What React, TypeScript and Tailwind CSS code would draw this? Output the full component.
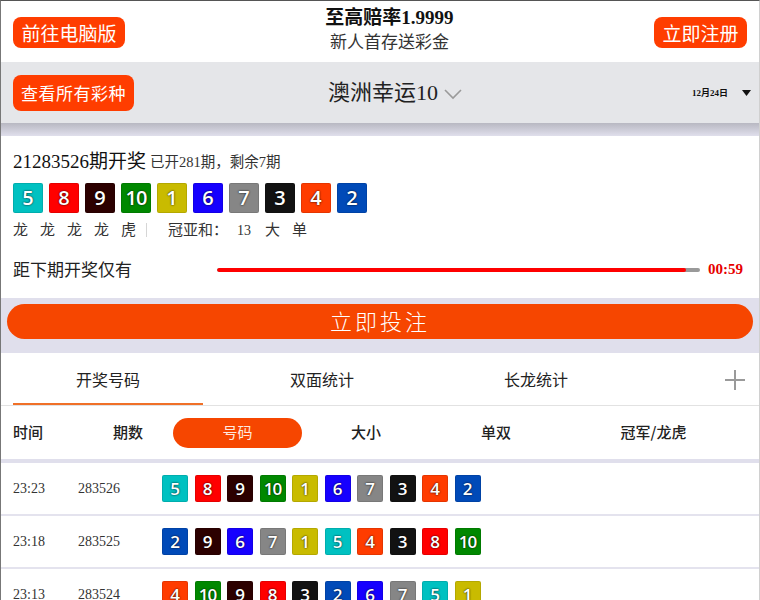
import React from 'react'

const SERIF = "font-['Liberation_Serif','Noto_Sans_CJK_SC',serif]"
const SANS = "font-['Noto_Sans_CJK_SC','Noto_Sans',sans-serif]"

const ballColors: Record<number, string> = {
  1: 'bg-[#c9bb00]',
  2: 'bg-[#004ab8]',
  3: 'bg-[#121212]',
  4: 'bg-[#ff3c00]',
  5: 'bg-[#00c1c1]',
  6: 'bg-[#1600ff]',
  7: 'bg-[#868686]',
  8: 'bg-[#ff0000]',
  9: 'bg-[#2c0000]',
  10: 'bg-[#008800]',
}

const history = [
  { time: '23:23', issue: '283526', nums: [5, 8, 9, 10, 1, 6, 7, 3, 4, 2] },
  { time: '23:18', issue: '283525', nums: [2, 9, 6, 7, 1, 5, 4, 3, 8, 10] },
  { time: '23:13', issue: '283524', nums: [4, 10, 9, 8, 3, 2, 6, 7, 5, 1] },
]

function Ball({ n, big }: { n: number; big?: boolean }) {
  return (
    <div
      className={`${ballColors[n]} ${big ? 'w-[30px] h-[30px] text-[20px]' : 'w-[26px] h-[27px] text-[17px]'} flex items-center justify-center rounded-[2px] border border-black/10 text-white font-semibold font-['Open_Sans','Noto_Sans',sans-serif] [text-shadow:0_0_2px_#000] ${n === 10 ? 'tracking-[-1px]' : ''}`}
    >
      {n}
    </div>
  )
}

export default function App() {
  return (
    <div className="w-[760px] h-[600px] overflow-hidden bg-[#e0dfec] border-t border-l border-r border-t-[#555] border-l-[#777] border-r-[#d0d0d0] flex flex-col">
      {/* top header */}
      <div className="h-[61px] bg-white flex items-center pl-[12px] pr-[12px] shrink-0">
        <button className={`${SANS} h-[31px] w-[112px] rounded-[8px] bg-[#ff3d00] text-white text-[19px] leading-none mt-[1px]`}>前往电脑版</button>
        <div className="flex-1 flex flex-col items-center">
          <div className={`${SERIF} text-[19px] font-bold text-[#111] leading-[22px] mt-[-2px]`}>至高赔率1.9999</div>
          <div className={`${SERIF} text-[17px] text-[#333] leading-[22px] mt-[3px]`}>新人首存送彩金</div>
        </div>
        <button className={`${SANS} h-[31px] w-[93px] rounded-[8px] bg-[#ff3d00] text-white text-[19px] leading-none mt-[1px]`}>立即注册</button>
      </div>

      {/* lottery bar */}
      <div className="h-[61px] bg-[#e5e6e9] flex items-center pl-[12px] shrink-0">
        <button className={`${SANS} h-[36px] w-[121px] rounded-[8px] bg-[#ff3d00] text-white text-[17px] leading-none tracking-[0.5px]`}>查看所有彩种</button>
        <div className="flex-1 flex items-center justify-center">
          <span className={`${SERIF} text-[22px] text-[#222] leading-none`}>澳洲幸运10</span>
          <svg width="20" height="12" viewBox="0 0 20 12" className="ml-[5px] mt-[2px]">
            <path d="M2 2 L10 10 L18 2" fill="none" stroke="#9a9a9a" strokeWidth="1.6" />
          </svg>
        </div>
        <div className="w-[102px] flex items-center justify-end pr-[8px] pt-[2px]">
          <span className={`${SERIF} text-[9px] font-bold text-[#111]`}>12月24日</span>
          <svg width="9" height="7" viewBox="0 0 9 7" className="ml-[14px]">
            <path d="M0 0 L9 0 L4.5 6 Z" fill="#111" />
          </svg>
        </div>
      </div>
      <div className="h-[13px] shrink-0 bg-linear-to-b from-[#b8b8c2] to-[#e0dfec]" />

      {/* current draw card */}
      <div className="bg-white pl-[12px] pr-[12px] pt-[14px] pb-[17px] shrink-0">
        <div className="h-[24px] flex items-center">
          <span className={`${SERIF} text-[19px] text-[#111]`}>21283526期开奖</span>
          <span className={`${SERIF} text-[14.5px] text-[#333] ml-[4px] mt-[2px]`}>已开281期，剩余7期</span>
        </div>
        <div className="flex gap-[6px] mt-[9px]">
          {[5, 8, 9, 10, 1, 6, 7, 3, 4, 2].map((n, i) => (
            <Ball key={i} n={n} big />
          ))}
        </div>
        <div className={`${SERIF} h-[20px] mt-[7px] flex items-center text-[15px] text-[#333]`}>
          <div className="flex gap-[12px]">
            {['龙', '龙', '龙', '龙', '虎'].map((t, i) => (
              <span key={i}>{t}</span>
            ))}
          </div>
          <span className="ml-[10px] w-px h-[14px] bg-[#d6d6d6]" />
          <span className="ml-[21px]">冠亚和：</span>
          <span className="ml-[9px] text-[14px]">13</span>
          <span className="ml-[14px]">大</span>
          <span className="ml-[12px]">单</span>
        </div>
        <div className="h-[24px] mt-[17px] flex items-center">
          <span className={`${SANS} text-[17px] text-[#222] w-[204px]`}>距下期开奖仅有</span>
          <div className="w-[483px] h-[4px] rounded-full bg-[#999] overflow-hidden mt-[1px]">
            <div className="h-full bg-[#ff0000] rounded-full" style={{ width: '97%' }} />
          </div>
          <span className={`${SERIF} ml-[8px] text-[15px] font-bold text-[#e60000]`}>00:59</span>
        </div>
      </div>

      {/* bet button */}
      <div className="pt-[6px] pb-[14px] pl-[6px] pr-[6px] shrink-0">
        <button className={`${SANS} w-full h-[35px] rounded-full bg-[#f64600] text-white text-[22px] leading-none tracking-[3px] font-light pb-[4px]`}>立即投注</button>
      </div>

      {/* tabs */}
      <div className="bg-white h-[53px] flex border-b border-[#e2e2e2] shrink-0">
        {['开奖号码', '双面统计', '长龙统计'].map((t, i) => (
          <div key={t} className="w-[214px] flex flex-col">
            <div className={`${SANS} flex-1 flex items-center justify-center text-[16px] text-[#222] pt-[1px]`}>{t}</div>
            <div className={`h-[2px] mx-[12px] ${i === 0 ? 'bg-[#f07028]' : 'bg-transparent'}`} />
          </div>
        ))}
        <div className="flex-1 flex items-center justify-end pr-[14px] pt-[1px]">
          <svg width="20" height="20" viewBox="0 0 20 20">
            <path d="M10 0 V20 M0 10 H20" stroke="#9a9a9a" strokeWidth="2" />
          </svg>
        </div>
      </div>

      {/* column header */}
      <div className={`${SANS} bg-white h-[53px] flex items-center pl-[12px] text-[15px] text-[#222] font-medium shrink-0`}>
        <span className="w-[100px]">时间</span>
        <span className="w-[60px]">期数</span>
        <span className="w-[129px] h-[30px] rounded-full bg-[#f64600] text-[#ffe9df] font-normal flex items-center justify-center">号码</span>
        <span className="w-[128px] text-center">大小</span>
        <span className="w-[132px] text-center">单双</span>
        <span className="w-[183px] text-center">冠军/龙虎</span>
      </div>
      <div className="h-[4px] bg-[#e0dfec] shrink-0" />

      {/* history rows */}
      {history.map(r => (
        <div key={r.issue} className="bg-white h-[53px] border-b-2 border-[#e4e3ee] flex items-center pl-[12px] shrink-0">
          <span className={`${SERIF} w-[65px] text-[14px] text-[#333]`}>{r.time}</span>
          <span className={`${SERIF} w-[84px] text-[14px] text-[#333]`}>{r.issue}</span>
          <div className="flex gap-[6.5px]">
            {r.nums.map((n, i) => (
              <Ball key={i} n={n} />
            ))}
          </div>
        </div>
      ))}
    </div>
  )
}
